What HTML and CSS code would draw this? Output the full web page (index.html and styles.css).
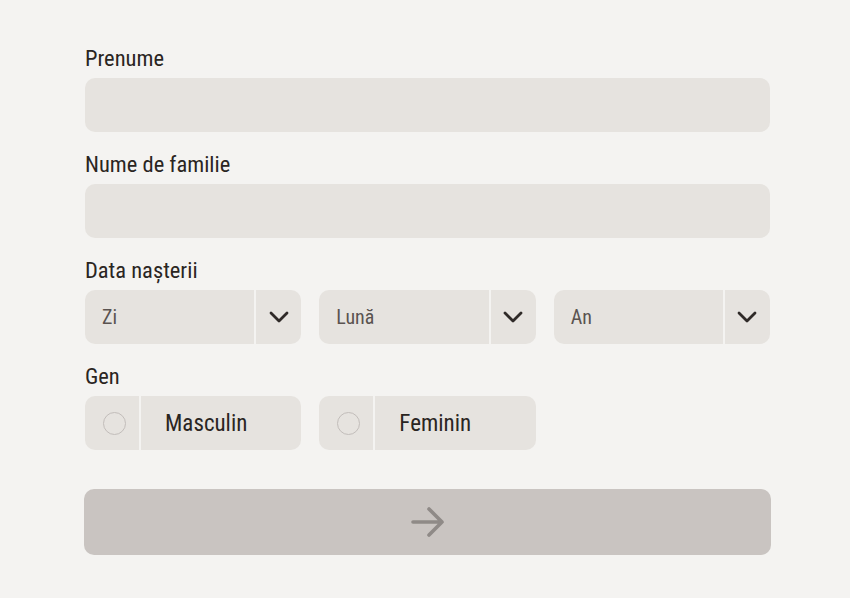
FILE: index.html
```html
<!DOCTYPE html>
<html lang="ro">
<head>
<meta charset="utf-8">
<title>Formular</title>
<link rel="stylesheet" href="styles.css">
</head>
<body>
<form class="form">
  <div class="field">
    <label class="label">Prenume</label>
    <div class="input"></div>
  </div>
  <div class="field">
    <label class="label">Nume de familie</label>
    <div class="input"></div>
  </div>
  <div class="field">
    <label class="label">Data nașterii</label>
    <div class="row">
      <div class="select"><span class="select-text">Zi</span><span class="select-btn"><svg width="20" height="12" viewBox="0 0 20 12"><path d="M2 2l8 8 8-8" fill="none" stroke="#2f2a28" stroke-width="2.8" stroke-linecap="round" stroke-linejoin="round"/></svg></span></div>
      <div class="select"><span class="select-text">Lună</span><span class="select-btn"><svg width="20" height="12" viewBox="0 0 20 12"><path d="M2 2l8 8 8-8" fill="none" stroke="#2f2a28" stroke-width="2.8" stroke-linecap="round" stroke-linejoin="round"/></svg></span></div>
      <div class="select"><span class="select-text">An</span><span class="select-btn"><svg width="20" height="12" viewBox="0 0 20 12"><path d="M2 2l8 8 8-8" fill="none" stroke="#2f2a28" stroke-width="2.8" stroke-linecap="round" stroke-linejoin="round"/></svg></span></div>
    </div>
  </div>
  <div class="field">
    <label class="label">Gen</label>
    <div class="row">
      <div class="radio"><span class="radio-box"><span class="circle"></span></span><span class="radio-text">Masculin</span></div>
      <div class="radio"><span class="radio-box"><span class="circle"></span></span><span class="radio-text">Feminin</span></div>
      <div class="spacer"></div>
    </div>
  </div>
  <button type="button" class="submit"><svg width="36" height="36" viewBox="0 0 36 36"><path d="M3 18h29M19 5l13 13-13 13" fill="none" stroke="#8f8a87" stroke-width="3.6" stroke-linecap="round" stroke-linejoin="round"/></svg></button>
</form>
</body>
</html>
```

FILE: styles.css
```css
html, body {
  margin: 0;
  padding: 0;
  background: #f4f3f1;
}
body {
  font-family: "Roboto Condensed", "Roboto", "Liberation Sans", sans-serif;
  color: #2f2a28;
}
.form {
  width: 685px;
  margin: 0 0 0 85px;
  padding-top: 45px;
  display: flex;
  flex-direction: column;
  gap: 19px;
}
.field {
  display: flex;
  flex-direction: column;
  gap: 7px;
}
.label {
  font-size: 22.5px;
  line-height: 26px;
  color: #2a2522;
}
.input {
  height: 54px;
  background: #e6e3df;
  border-radius: 10px;
}
.row {
  display: grid;
  grid-template-columns: 1fr 1fr 1fr;
  gap: 18px;
}
.select {
  height: 54px;
  background: #e6e3df;
  border-radius: 10px;
  display: flex;
  align-items: center;
}
.select-text {
  flex: 1;
  padding-left: 17px;
  font-size: 20px;
  color: #5a5350;
}
.select-btn {
  width: 45px;
  height: 54px;
  border-left: 2px solid #f4f3f1;
  display: flex;
  align-items: center;
  justify-content: center;
}
.radio {
  height: 54px;
  background: #e6e3df;
  border-radius: 10px;
  display: flex;
  align-items: center;
}
.radio-box {
  width: 56px;
  height: 54px;
  border-right: 2px solid #f4f3f1;
  display: flex;
  align-items: center;
  padding-left: 18px;
  box-sizing: border-box;
}
.circle {
  width: 23px;
  height: 23px;
  border-radius: 50%;
  border: 1.5px solid #c2bdba;
  box-sizing: border-box;
}
.radio-text {
  padding-left: 24px;
  font-size: 23px;
  color: #2a2522;
}
.submit {
  margin: 20px -1px 0;
  height: 66px;
  background: #c9c4c1;
  border: none;
  border-radius: 10px;
  display: flex;
  align-items: center;
  justify-content: center;
  padding: 0;
}
```
